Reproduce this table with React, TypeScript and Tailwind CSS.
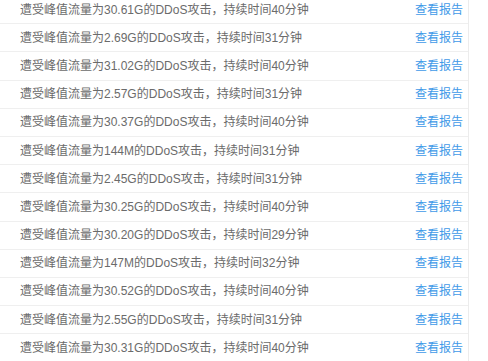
import React from "react";

const rows = [
  ["30.61G", "40"],
  ["2.69G", "31"],
  ["31.02G", "40"],
  ["2.57G", "31"],
  ["30.37G", "40"],
  ["144M", "31"],
  ["2.45G", "31"],
  ["30.25G", "40"],
  ["30.20G", "29"],
  ["147M", "32"],
  ["30.52G", "40"],
  ["2.55G", "31"],
  ["30.31G", "40"],
];

export default function App() {
  return (
    <div
      className="w-[488px] h-[361px] overflow-hidden bg-white"
      style={{ fontFamily: '"Liberation Sans", "Noto Sans CJK SC", sans-serif' }}
    >
      <div className="w-[469px] border-r border-[#ececec] -mt-[4px]">
        {rows.map(([v, t], i) => (
          <div
            key={i}
            className="h-[28.2px] flex items-center justify-between pl-[20px] pr-[5px] border-b border-[#efefef] text-[12px]"
          >
            <span className="text-[#6b6b6b]">
              遭受峰值流量为{v}的DDoS攻击，持续时间{t}分钟
            </span>
            <span className="text-[#3f9ae8]">查看报告</span>
          </div>
        ))}
      </div>
    </div>
  );
}
